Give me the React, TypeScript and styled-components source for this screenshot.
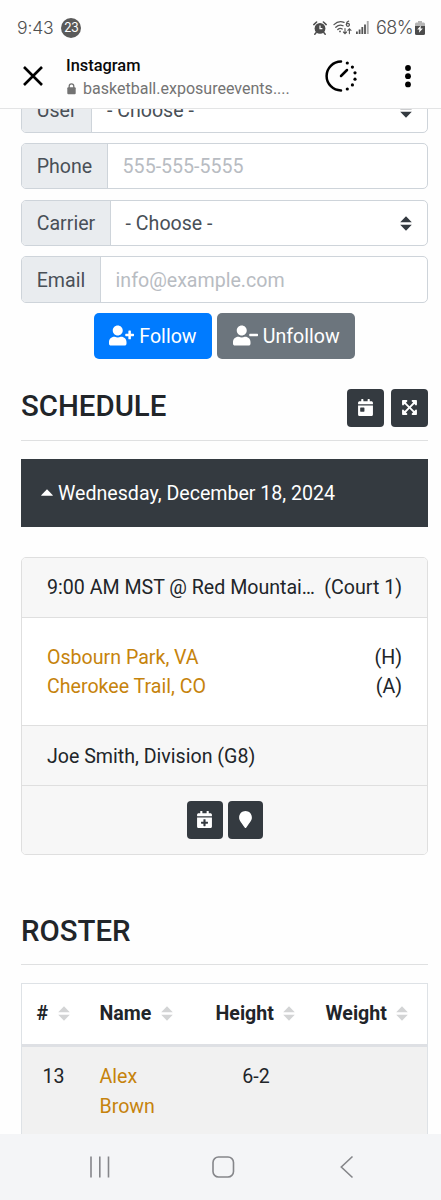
import React from 'react';
import styled, { createGlobalStyle } from 'styled-components';
import {
  FaUserPlus,
  FaUserMinus,
  FaCalendarDay,
  FaExpandArrowsAlt,
  FaCalendarPlus,
  FaMapMarker,
} from 'react-icons/fa';

const GlobalStyle = createGlobalStyle`
  * { box-sizing: border-box; }
  body {
    margin: 0;
    background: #fff;
    color: #212529;
    font-family: Roboto, "Liberation Sans", sans-serif;
    font-size: 19.6px;
    line-height: 29.4px;
  }
`;

const Phone = styled.div`
  width: 441px;
  height: 1200px;
  display: flex;
  flex-direction: column;
  overflow: hidden;
  background: #fefefe;
`;

const StatusBar = styled.div`
  height: 54px;
  flex: none;
  display: flex;
  align-items: center;
  padding: 1px 16px 0 17px;
  font-family: Inter, Roboto, sans-serif;
  color: #505050;
`;

const Clock = styled.span`
  font-size: 17.6px;
  font-weight: 300;
  width: 44px;
  letter-spacing: -0.2px;
`;

const CountBadge = styled.span`
  width: 20px;
  height: 20px;
  border-radius: 50%;
  background: #5a5a5a;
  color: #fff;
  font-size: 12.5px;
  line-height: 20px;
  text-align: center;
  letter-spacing: -0.6px;
`;

const StatusIcons = styled.div`
  margin-left: auto;
  display: flex;
  align-items: center;
  svg { display: block; }
`;

const WifiIcon = styled.svg`
  margin-left: 6px;
`;

const SignalIcon = styled.svg`
  margin-left: 4px;
`;

const Battery = styled.span`
  font-size: 18px;
  font-weight: 300;
  letter-spacing: -0.55px;
  width: 38px;
  margin-left: 7px;
  margin-right: 1px;
  white-space: nowrap;
`;

const BrowserBar = styled.div`
  height: 55px;
  flex: none;
  display: flex;
  align-items: flex-start;
  border-bottom: 1px solid #e3e4e5;
  padding-left: 22px;
  svg { display: block; flex: none; }
`;

const CloseIcon = styled.svg`
  margin-top: 11px;
`;

const PageInfo = styled.div`
  width: 232px;
  margin-left: 22px;
`;

const AppName = styled.div`
  font-size: 16.4px;
  font-weight: 500;
  line-height: 22px;
  padding-top: 1px;
  color: #0a0a0a;
`;

const Address = styled.div`
  display: flex;
  align-items: center;
  gap: 7px;
  margin-top: 1px;
  font-size: 16.05px;
  line-height: 22px;
  color: #737373;
  padding-left: 1px;
`;

const DialIcon = styled.svg`
  margin: 5px 0 0 26px;
`;

const MoreIcon = styled.svg`
  margin: 10px 0 0 45.5px;
`;

const Page = styled.main`
  flex: 1;
  min-height: 0;
  overflow: hidden;
  padding: 0 13px 0 21px;
`;

const Form = styled.div`
  margin-top: -23px;
  display: flex;
  flex-direction: column;
  gap: 10.2px;
`;

const InputGroup = styled.div`
  height: 46.6px;
  display: flex;
  border: 1px solid #ced4da;
  border-radius: 5px;
  overflow: hidden;
  background: #fff;
`;

const Label = styled.div`
  display: flex;
  align-items: center;
  padding: 2px 14.7px 0;
  background: #e9ecef;
  border-right: 1px solid #ced4da;
  color: #495057;
`;

const Field = styled.div<{ $placeholder?: boolean }>`
  flex: 1;
  display: flex;
  align-items: center;
  justify-content: space-between;
  padding: 2px 15px 0 14.7px;
  color: ${(p) => (p.$placeholder ? '#b8bcc2' : '#495057')};
`;

const ButtonRow = styled.div`
  display: flex;
  justify-content: center;
  gap: 5px;
  margin-top: 10px;
`;

const Button = styled.button<{ $tone: 'primary' | 'secondary' }>`
  height: 46px;
  padding: 1px 15.6px 0;
  border: 0;
  border-radius: 5px;
  display: flex;
  align-items: center;
  gap: 5px;
  color: #fff;
  background: ${(p) => (p.$tone === 'primary' ? '#007bff' : '#6c757d')};
  font: inherit;
  svg { margin-top: -2px; }
`;

const SectionHead = styled.div<{ $top: number }>`
  margin-top: ${(p) => p.$top}px;
  height: 52px;
  display: flex;
  justify-content: space-between;
  border-bottom: 1px solid #dfe0e1;
`;

const Title = styled.h2<{ $drop?: number }>`
  margin: 0;
  padding-top: ${(p) => p.$drop ?? 0}px;
  font-size: 29.4px;
  font-weight: 500;
  line-height: 35px;
`;

const Tools = styled.div<{ $gap: number }>`
  display: flex;
  justify-content: center;
  gap: ${(p) => p.$gap}px;
`;

const IconButton = styled.button<{ $width?: number }>`
  width: ${(p) => p.$width ?? 37}px;
  height: 38px;
  padding: 0;
  border: 0;
  border-radius: 4px;
  background: #343a40;
  color: #fff;
  display: flex;
  align-items: center;
  justify-content: center;
  font-size: 17px;
`;

const DayBar = styled.div`
  margin-top: 18px;
  height: 68px;
  display: flex;
  align-items: center;
  gap: 5px;
  padding: 2px 0 0 20px;
  background: #343a40;
  color: #fff;
  svg { margin-top: -2px; }
`;

const Card = styled.section`
  margin-top: 30px;
  border: 1px solid #dfdfdf;
  border-radius: 5px;
  background: #fff;
  overflow: hidden;
`;

const CardBand = styled.div<{ $height: number; $last?: boolean; $plain?: boolean }>`
  height: ${(p) => p.$height}px;
  display: flex;
  flex-direction: column;
  justify-content: center;
  padding: ${(p) => (p.$last ? '0 25px 1px' : '2px 25px 0')};
  background: ${(p) => (p.$plain ? '#fff' : '#f7f7f7')};
  border-bottom: ${(p) => (p.$last ? '0' : '1px solid #dfdfdf')};
`;

const Line = styled.div`
  display: flex;
  justify-content: space-between;
  white-space: nowrap;
`;

const Link = styled.a`
  color: #c6830c;
`;

const Table = styled.div`
  margin-top: 18px;
  border: 1px solid #dee2e6;
`;

const Row = styled.div<{ $head?: boolean }>`
  display: grid;
  grid-template-columns: 63px 116px 110px 1fr;
  height: ${(p) => (p.$head ? '63px' : '120px')};
  background: ${(p) => (p.$head ? '#fff' : '#f1f1f1')};
  border-bottom: ${(p) => (p.$head ? '3px solid #dee0e4' : '0')};
  font-weight: ${(p) => (p.$head ? 700 : 400)};
  padding-top: 15px;
`;

const Cell = styled.div<{ $center?: boolean }>`
  padding: 0 14.5px;
  line-height: 29.8px;
  text-align: ${(p) => (p.$center ? 'center' : 'left')};
`;

const HeadCell = styled(Cell)`
  display: flex;
  align-items: center;
  height: 29.4px;
  gap: 9.4px;
  svg { flex: none; }
`;

const NavBar = styled.nav`
  height: 66px;
  flex: none;
  display: flex;
  align-items: center;
  background: #f4f5f7;
  padding: 0 0 0 88px;
  gap: 98.5px;
`;

const SortArrows = ({ color }: { color: string }) => (
  <svg width="12" height="15" viewBox="0 0 12 15">
    <path d="M6 .3 11.8 6.3H.2zM6 14.7 11.8 8.7H.2z" fill={color} />
  </svg>
);

const columns = ['#', 'Name', 'Height', 'Weight'];

export default function App() {
  return (
    <>
      <GlobalStyle />
      <Phone>
        <StatusBar>
          <Clock>9:43</Clock>
          <CountBadge>23</CountBadge>
          <StatusIcons>
            <svg width="14" height="14" viewBox="0 0 14 14">
              <circle cx="7" cy="7.4" r="5.4" fill="#4c4c4c" />
              <path d="M.8 3.6 3.6 1M13.2 3.6 10.4 1M3.2 11.6 1.8 13.2M10.8 11.6l1.4 1.6" stroke="#4c4c4c" strokeWidth="1.5" strokeLinecap="round" />
              <path d="M7 4.4v3.2h2.4" stroke="#fff" strokeWidth="1.2" fill="none" />
            </svg>
            <WifiIcon width="19" height="15" viewBox="0 0 19 15" fill="none" stroke="#555" strokeWidth="1.3" strokeLinecap="round">
              <path d="M1 4.6Q5.5.2 11 2.4M2.8 7.2q3.6-3.3 7.2-1.4M4.8 9.6q2.2-2 4.4-.6" />
              <circle cx="7" cy="11.4" r=".9" fill="#555" stroke="none" />
              <path d="M15.6 1.2q-2 .6-2.2 3" />
              <circle cx="14.9" cy="4.8" r="1.5" />
              <path d="M12 8.6v4.8M10.4 12 12 13.6 13.6 12M16.4 13.6V8.8M14.9 10.3l1.5-1.6L18 10.3" strokeWidth="1.1" />
            </WifiIcon>
            <SignalIcon width="13" height="13" viewBox="0 0 13 13" fill="#555">
              <path d="M0 10.5h1.8V13H0zM2.7 8.6h1.8V13H2.7zM5.4 6h1.8v7H5.4zM8.1 3.4h1.8V13H8.1z" />
              <path d="M10.8 0h1.9v13h-1.9z" fill="#aaa" />
            </SignalIcon>
            <Battery>68%</Battery>
            <svg width="10" height="14" viewBox="0 0 10 14">
              <path d="M3 0h4v1.5h1.8Q10 1.5 10 3v2.5H0V3q0-1.5 1.2-1.5H3z" fill="#b5b5b5" />
              <path d="M0 5h10v7.500q0 1.500-1.500 1.500h-7Q0 14 0 12.500z" fill="#4c4c4c" />
              <path d="M5.900 4.600 2.200 8.600h2.200l-.5 3.200 4-4.200H5.600z" fill="#fff" />
            </svg>
          </StatusIcons>
        </StatusBar>

        <BrowserBar>
          <CloseIcon width="22" height="22" viewBox="0 0 22 22">
            <path d="M2 2l18 18M20 2 2 20" stroke="#000" strokeWidth="2.6" />
          </CloseIcon>
          <PageInfo>
            <AppName>Instagram</AppName>
            <Address>
              <svg width="9" height="12" viewBox="0 0 9 12">
                <path d="M2.200 5V3.200a2.300 2.300 0 0 1 4.600 0V5" fill="none" stroke="#737373" strokeWidth="1.300" />
                <rect x=".3" y="4.300" width="8.400" height="7" rx="1" fill="#737373" />
              </svg>
              basketball.exposureevents....
            </Address>
          </PageInfo>
          <DialIcon width="34" height="34" viewBox="0 0 34 34">
            <path d="M17 2.600A14.400 14.400 0 0 0 17 31.400" fill="none" stroke="#000" strokeWidth="2.500" strokeLinecap="round" />
            <path d="M17 17l6-6" stroke="#000" strokeWidth="2.500" strokeLinecap="round" />
            <g fill="#000">
              <circle cx="23.300" cy="4" r="1.600" />
              <circle cx="28.400" cy="8.100" r="1.600" />
              <circle cx="31" cy="13.800" r="1.600" />
              <circle cx="31" cy="20.200" r="1.600" />
              <circle cx="28.400" cy="25.900" r="1.600" />
              <circle cx="23.300" cy="30" r="1.600" />
            </g>
          </DialIcon>
          <MoreIcon width="8" height="24" viewBox="0 0 8 24">
            <circle cx="4" cy="4" r="2.900" />
            <circle cx="4" cy="12.200" r="2.900" />
            <circle cx="4" cy="20.400" r="2.900" />
          </MoreIcon>
        </BrowserBar>

        <Page>
          <Form>
            <InputGroup>
              <Label>User</Label>
              <Field>- Choose -<SortArrows color="#343a40" /></Field>
            </InputGroup>
            <InputGroup>
              <Label>Phone</Label>
              <Field $placeholder>555-555-5555</Field>
            </InputGroup>
            <InputGroup>
              <Label>Carrier</Label>
              <Field>- Choose -<SortArrows color="#343a40" /></Field>
            </InputGroup>
            <InputGroup>
              <Label>Email</Label>
              <Field $placeholder>info@example.com</Field>
            </InputGroup>
          </Form>

          <ButtonRow>
            <Button $tone="primary"><FaUserPlus size={25} />Follow</Button>
            <Button $tone="secondary"><FaUserMinus size={25} />Unfollow</Button>
          </ButtonRow>

          <SectionHead $top={29.6}>
            <Title>SCHEDULE</Title>
            <Tools $gap={7}>
              <IconButton><FaCalendarDay /></IconButton>
              <IconButton><FaExpandArrowsAlt /></IconButton>
            </Tools>
          </SectionHead>

          <DayBar>
            <svg width="12" height="7" viewBox="0 0 12 7">
              <path d="M6 .2 11.800 6.200q0 .6-.6.6H.8q-.6 0-.6-.6z" fill="#fff" />
            </svg>
            Wednesday, December 18, 2024
          </DayBar>

          <Card>
            <CardBand $height={60}>
              <Line>
                <span>9:00 AM MST @ Red Mountai…</span>
                <span>(Court 1)</span>
              </Line>
            </CardBand>
            <CardBand $height={108.5} $plain>
              <Line><Link>Osbourn Park, VA</Link><span>(H)</span></Line>
              <Line><Link>Cherokee Trail, CO</Link><span>(A)</span></Line>
            </CardBand>
            <CardBand $height={60}>Joe Smith, Division (G8)</CardBand>
            <CardBand $height={68} $last>
              <Tools $gap={5}>
                <IconButton $width={36}><FaCalendarPlus /></IconButton>
                <IconButton $width={35}><FaMapMarker /></IconButton>
              </Tools>
            </CardBand>
          </Card>

          <SectionHead $top={58}>
            <Title $drop={1}>ROSTER</Title>
          </SectionHead>

          <Table>
            <Row $head>
              {columns.map((name) => (
                <HeadCell key={name}>
                  {name}
                  <SortArrows color="#d3d4d5" />
                </HeadCell>
              ))}
            </Row>
            <Row>
              <Cell $center>13</Cell>
              <Cell><Link>Alex<br />Brown</Link></Cell>
              <Cell $center>6-2</Cell>
              <Cell />
            </Row>
          </Table>
        </Page>

        <NavBar>
          <svg width="24" height="24" viewBox="0 0 24 24" stroke="#85868a" strokeWidth="1.600">
            <path d="M3 1.500v21M11.800 1.500v21M20.500 1.500v21" />
          </svg>
          <svg width="24" height="24" viewBox="0 0 24 24" fill="none" stroke="#85868a" strokeWidth="1.600">
            <rect x="2" y="2" width="20.500" height="20" rx="5.500" />
          </svg>
          <svg width="24" height="24" viewBox="0 0 24 24" fill="none" stroke="#85868a" strokeWidth="1.600">
            <path d="M19.500 1.500 8.300 12l11.200 10.500" />
          </svg>
        </NavBar>
      </Phone>
    </>
  );
}
